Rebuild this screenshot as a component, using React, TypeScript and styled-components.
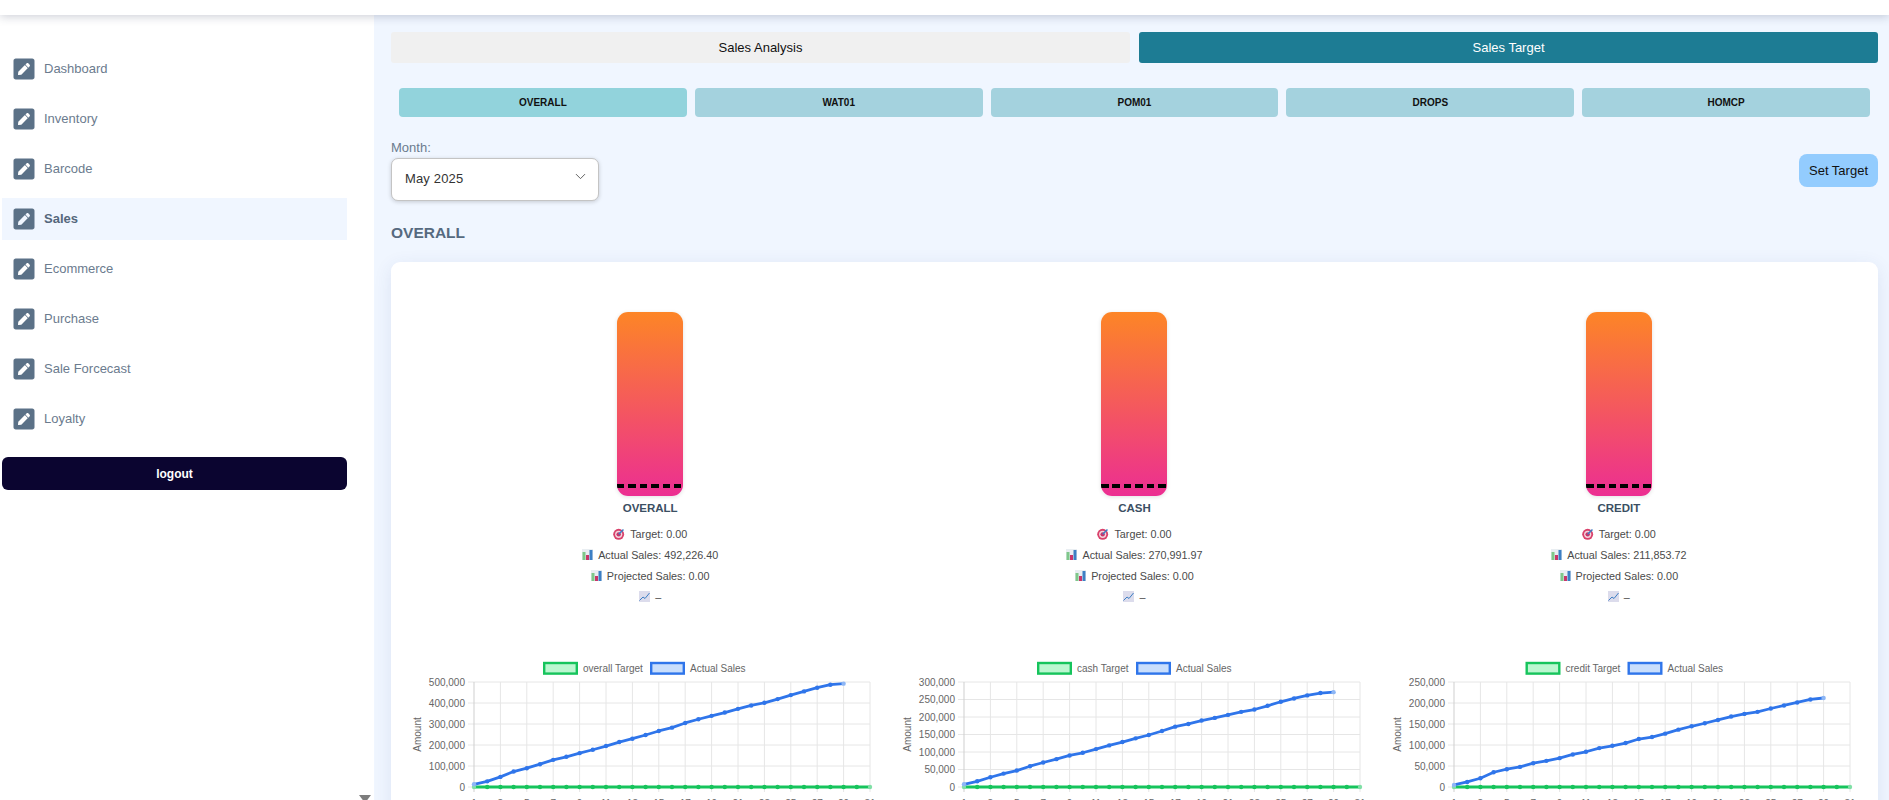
import styled, { createGlobalStyle } from "styled-components";
import { FaPenSquare } from "react-icons/fa";
import { ChevronDown } from "lucide-react";

const GlobalStyle = createGlobalStyle`
  html, body {
    margin: 0;
    padding: 0;
    height: 100%;
    overflow: hidden;
    font-family: "Liberation Sans", Arial, sans-serif;
  }
  * {
    box-sizing: border-box;
  }
`;

const Page = styled.div`
  height: 800px;
  overflow: hidden;
  display: flex;
  flex-direction: column;
  background-color: #f0f6ff;
`;

const TopBar = styled.header`
  flex: none;
  height: 15px;
  background-color: #fff;
  box-shadow: 0 2px 10px rgba(40, 50, 80, 0.22);
  position: relative;
  z-index: 3;
`;

const Body = styled.div`
  flex: 1;
  display: flex;
  min-height: 0;
`;

/////////////////////Sidebar//////////////////////////
const Sidebar = styled.aside`
  flex: none;
  width: 374px;
  padding: 33px 0 0 2px;
  background-color: #fff;
  position: relative;
  z-index: 2;
`;

const NavList = styled.ul`
  list-style: none;
  margin: 0;
  padding: 0;
  width: 345px;
  display: flex;
  flex-direction: column;
  gap: 8px;
`;

const NavItem = styled.li<{ $active?: boolean }>`
  height: 42px;
  display: flex;
  align-items: center;
  gap: 8.5px;
  padding-left: 9.5px;
  font-size: 13px;
  font-weight: ${(p) => (p.$active ? "bold" : "normal")};
  color: ${(p) => (p.$active ? "#54677c" : "#6b7b8e")};
  background-color: ${(p) => (p.$active ? "#f0f6ff" : "transparent")};
  svg {
    color: #5b7187;
    flex: none;
  }
`;

const NavLabel = styled.span`
  margin-bottom: 2px;
`;

const LogoutButton = styled.button`
  display: block;
  width: 345px;
  height: 33px;
  margin-top: 17px;
  border: none;
  border-radius: 6px;
  background-color: #0b0530;
  color: #fff;
  font-family: inherit;
  font-size: 12px;
  font-weight: bold;
`;

const ScrollArrow = styled.span`
  position: absolute;
  right: 3px;
  bottom: -3px;
  width: 0;
  height: 0;
  border-left: 6.5px solid transparent;
  border-right: 6.5px solid transparent;
  border-top: 8px solid #7d7d7d;
`;

/////////////////////Main//////////////////////////
const Main = styled.main`
  flex: 1;
  min-width: 0;
  padding: 17px 11px 0 17px;
`;

const TabRow = styled.div`
  display: grid;
  grid-template-columns: 1fr 1fr;
  gap: 9px;
`;

const Tab = styled.div<{ $active?: boolean }>`
  height: 31px;
  display: flex;
  align-items: center;
  justify-content: center;
  border-radius: 3px;
  font-size: 13px;
  color: ${(p) => (p.$active ? "#fff" : "#111")};
  background-color: ${(p) => (p.$active ? "#1d7c94" : "#f0f0f0")};
`;

const SubTabRow = styled.div`
  display: grid;
  grid-template-columns: repeat(5, 1fr);
  gap: 8px;
  margin: 25px 8px 0;
`;

const SubTab = styled.div<{ $active?: boolean }>`
  height: 29px;
  display: flex;
  align-items: center;
  justify-content: center;
  border-radius: 4px;
  font-size: 10px;
  font-weight: bold;
  color: #111;
  background-color: ${(p) => (p.$active ? "#92d3dc" : "#a4d2de")};
`;

const FilterRow = styled.div`
  display: flex;
  align-items: center;
  justify-content: space-between;
  margin-top: 23px;
`;

const MonthLabel = styled.div`
  height: 18px;
  line-height: 15px;
  font-size: 13px;
  color: #6b7b8e;
`;

const MonthSelect = styled.div`
  width: 208px;
  height: 43px;
  display: flex;
  align-items: center;
  justify-content: space-between;
  padding: 0 9px 2px 13px;
  background-color: #fff;
  border: 1px solid #c4c4c4;
  border-radius: 7px;
  box-shadow: 0 1px 4px rgba(0, 0, 0, 0.18);
  font-size: 13px;
  letter-spacing: 0.15px;
  color: #333;
  svg {
    margin-bottom: 4px;
  }
`;

const SetTargetButton = styled.button`
  width: 79px;
  height: 33px;
  padding: 0;
  border: none;
  border-radius: 8px;
  background-color: #93ccfe;
  color: #111;
  font-family: inherit;
  font-size: 13px;
`;

const SectionTitle = styled.h2`
  margin: 23px 0 20px;
  height: 18px;
  line-height: 18px;
  font-size: 15.5px;
  font-weight: bold;
  color: #566a80;
`;

const Card = styled.section`
  padding: 50px 17px 0;
  background-color: #fff;
  border-radius: 9px;
  box-shadow: 0 4px 18px rgba(50, 70, 150, 0.1);
`;

const GaugeGrid = styled.div`
  display: grid;
  grid-template-columns: repeat(3, 1fr);
`;

const GaugeColumn = styled.div`
  display: flex;
  flex-direction: column;
  align-items: center;
`;

const GaugeBar = styled.div`
  position: relative;
  width: 66px;
  height: 184px;
  overflow: hidden;
  border-radius: 11px;
  background: linear-gradient(#fd8526, #ec2e92);
  box-shadow: 0 1px 4px rgba(0, 0, 0, 0.12);
`;

const TargetLine = styled.span`
  position: absolute;
  left: 0;
  right: 0;
  bottom: 8px;
  height: 4px;
  background: repeating-linear-gradient(90deg, #000 0 7.5px, transparent 7.5px 11.4px);
`;

const GaugeName = styled.div`
  margin-top: 5px;
  height: 14px;
  line-height: 14px;
  font-size: 11.5px;
  font-weight: bold;
  color: #3b4f63;
`;

const StatList = styled.div`
  margin-top: 8px;
`;

const StatRow = styled.div`
  height: 21px;
  display: flex;
  align-items: center;
  justify-content: center;
  gap: 5px;
  font-size: 10.8px;
  color: #4a4a4a;
`;

const ChartGrid = styled.div`
  display: grid;
  grid-template-columns: repeat(3, 464px);
  gap: 26px;
  margin-top: 48px;
  padding-left: 4px;
`;

const ChartSvg = styled.svg`
  display: block;
  text {
    font-family: "Liberation Sans", Arial, sans-serif;
    font-size: 10px;
    fill: #666;
  }
`;

const TargetIcon = () => (
  <svg width="12" height="12" viewBox="0 0 11 11">
    <circle cx="5.2" cy="5.8" r="5" fill="#d9416b" />
    <circle cx="5.2" cy="5.8" r="3.3" fill="#f3d5dc" />
    <circle cx="5.2" cy="5.8" r="2" fill="#c9356a" />
    <path d="M5.2 5.8 9.6 1.4" stroke="#3d7fc4" strokeWidth="1.4" />
  </svg>
);

const BarsIcon = () => (
  <svg width="11" height="11" viewBox="0 0 11 11">
    <rect width="11" height="11" fill="#e9eef2" />
    <rect x="0.5" y="3" width="3" height="8" fill="#7fc78a" />
    <rect x="4" y="6" width="3" height="5" fill="#c9356a" />
    <rect x="7.5" y="1" width="3" height="10" fill="#3d7fc4" />
  </svg>
);

const TrendIcon = () => (
  <svg width="11" height="11" viewBox="0 0 11 11">
    <rect width="11" height="11" fill="#dcdcec" />
    <path d="M0.5 9.5 4 6l2 1.5L10.5 2" fill="none" stroke="#3d7fc4" strokeWidth="1" />
  </svg>
);

const PLOT = { left: 62, right: 458, top: 27, bottom: 132 };
const GREEN = "#16c45c";
const BLUE = "#2f75ea";

type ChartProps = {
  name: string;
  nameWidth: number;
  max: number;
  step: number;
  sales: number[];
};

function SalesChart({ name, nameWidth, max, step, sales }: ChartProps) {
  const xAt = (i: number) => PLOT.left + (i * (PLOT.right - PLOT.left)) / 30;
  const yAt = (v: number) => PLOT.bottom - (v / max) * (PLOT.bottom - PLOT.top);
  const days = Array.from({ length: 31 }, (_, i) => i);
  const yTicks: number[] = [];
  for (let v = 0; v <= max; v += step) yTicks.push(v);

  // legend is centred over the chart like chart.js does
  const legendStart = 232 - (35 + 5 + nameWidth + 7 + 35 + 5 + 55) / 2;
  const actualStart = legendStart + 35 + 5 + nameWidth + 7;

  return (
    <ChartSvg width="464" height="170" viewBox="0 0 464 170">
      <rect x={legendStart + 1.2} y="8" width="32.6" height="10.6" fill="#bbf7d0" stroke={GREEN} strokeWidth="2.4" />
      <text x={legendStart + 40} y="17">{name} Target</text>
      <rect x={actualStart + 1.2} y="8" width="32.6" height="10.6" fill="#c9defc" stroke={BLUE} strokeWidth="2.4" />
      <text x={actualStart + 40} y="17">Actual Sales</text>

      <text transform={`translate(8.7 ${(PLOT.top + PLOT.bottom) / 2}) rotate(-90)`} textAnchor="middle">
        Amount
      </text>

      {yTicks.map((v) => (
        <g key={v}>
          <line x1={PLOT.left - 6} x2={PLOT.right} y1={yAt(v)} y2={yAt(v)} stroke="#e6e6e6" />
          <text x={PLOT.left - 9} y={yAt(v) + 3.5} textAnchor="end">
            {v.toLocaleString("en-US")}
          </text>
        </g>
      ))}
      {days
        .filter((i) => i % 2 === 0)
        .map((i) => (
          <g key={i}>
            <line x1={xAt(i)} x2={xAt(i)} y1={PLOT.top} y2={PLOT.bottom + 5} stroke={i === 0 ? "#cfcfcf" : "#e6e6e6"} />
            {/* the day labels run under the bottom of the window */}
            <text x={xAt(i)} y="152" textAnchor="middle">
              {i + 1}
            </text>
          </g>
        ))}

      <line x1={xAt(0)} x2={xAt(30)} y1={PLOT.bottom} y2={PLOT.bottom} stroke={GREEN} strokeWidth="2.8" />
      {days.map((i) => (
        <circle key={i} cx={xAt(i)} cy={PLOT.bottom} r="2.2" fill={i === 0 || i === 30 ? "#7fe0a6" : GREEN} />
      ))}

      <polyline
        fill="none"
        stroke={BLUE}
        strokeWidth="2.8"
        strokeLinejoin="round"
        points={sales.map((v, i) => `${xAt(i)},${yAt(v * 1000)}`).join(" ")}
      />
      {sales.map((v, i) => (
        <circle key={i} cx={xAt(i)} cy={yAt(v * 1000)} r="2.2" fill={i === sales.length - 1 || i === 0 ? "#8db6f5" : BLUE} />
      ))}
    </ChartSvg>
  );
}

const navItems = ["Dashboard", "Inventory", "Barcode", "Sales", "Ecommerce", "Purchase", "Sale Forcecast", "Loyalty"];
const subTabs = ["OVERALL", "WAT01", "POM01", "DROPS", "HOMCP"];

const gauges = [
  { name: "OVERALL", actual: "492,226.40" },
  { name: "CASH", actual: "270,991.97" },
  { name: "CREDIT", actual: "211,853.72" },
];

const overallSales = [
  12.8, 27, 48, 73.5, 89.5, 108.6, 129.4, 143.8, 161.3, 177.3, 194.9, 214, 230, 247.6, 266.8, 282.7, 305, 322.7, 338.7,
  354.6, 372.2, 388.2, 401, 418.5, 437.7, 455.3, 472.8, 487.2, 492.2,
];
const cashSales = [
  7.7, 16.3, 27.8, 38.3, 47, 59.4, 70, 79.6, 90.1, 97.8, 108.3, 118.9, 128.4, 139, 148.6, 160, 172.5, 180.2, 189.8,
  197.4, 206, 214.7, 221.4, 232, 243.5, 253, 261.7, 268.4, 271,
];
const creditSales = [
  4.8, 12, 20.8, 35.1, 42.3, 47.9, 56.7, 62.3, 68.7, 77.5, 83.9, 92.6, 98.2, 104.6, 114.2, 119, 127, 136.6, 144.6,
  151.8, 159.7, 167.7, 174.1, 178.9, 186.9, 194.1, 201.3, 208.5, 211.9,
];

export default function App() {
  return (
    <Page>
      <GlobalStyle />
      <TopBar />
      <Body>
        <Sidebar>
          <NavList>
            {navItems.map((item) => (
              <NavItem key={item} $active={item === "Sales"}>
                <FaPenSquare size={24} />
                <NavLabel>{item}</NavLabel>
              </NavItem>
            ))}
          </NavList>
          <LogoutButton>logout</LogoutButton>
          <ScrollArrow />
        </Sidebar>

        <Main>
          <TabRow>
            <Tab>Sales Analysis</Tab>
            <Tab $active>Sales Target</Tab>
          </TabRow>

          <SubTabRow>
            {subTabs.map((tab) => (
              <SubTab key={tab} $active={tab === "OVERALL"}>
                {tab}
              </SubTab>
            ))}
          </SubTabRow>

          <FilterRow>
            <div>
              <MonthLabel>Month:</MonthLabel>
              <MonthSelect>
                May 2025
                <ChevronDown size={17} strokeWidth={1.3} color="#555" />
              </MonthSelect>
            </div>
            <SetTargetButton>Set Target</SetTargetButton>
          </FilterRow>

          <SectionTitle>OVERALL</SectionTitle>

          <Card>
            <GaugeGrid>
              {gauges.map((g) => (
                <GaugeColumn key={g.name}>
                  <GaugeBar>
                    <TargetLine />
                  </GaugeBar>
                  <GaugeName>{g.name}</GaugeName>
                  <StatList>
                    <StatRow>
                      <TargetIcon />
                      Target: 0.00
                    </StatRow>
                    <StatRow>
                      <BarsIcon />
                      Actual Sales: {g.actual}
                    </StatRow>
                    <StatRow>
                      <BarsIcon />
                      Projected Sales: 0.00
                    </StatRow>
                    <StatRow>
                      <TrendIcon />–
                    </StatRow>
                  </StatList>
                </GaugeColumn>
              ))}
            </GaugeGrid>

            <ChartGrid>
              <SalesChart name="overall" nameWidth={60} max={500000} step={100000} sales={overallSales} />
              <SalesChart name="cash" nameWidth={52} max={300000} step={50000} sales={cashSales} />
              <SalesChart name="credit" nameWidth={55} max={250000} step={50000} sales={creditSales} />
            </ChartGrid>
          </Card>
        </Main>
      </Body>
    </Page>
  );
}
